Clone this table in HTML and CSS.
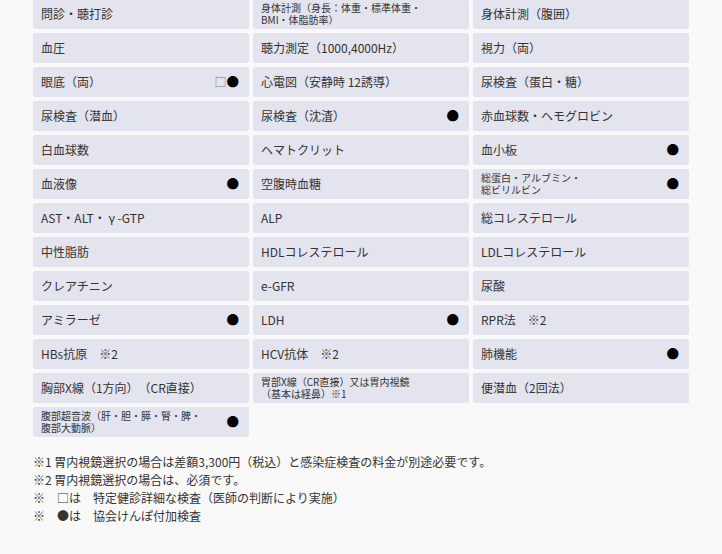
FILE: index.html
```html
<!DOCTYPE html>
<html lang="ja">
<head>
<meta charset="utf-8">
<link rel="stylesheet" href="styles.css">
</head>
<body>
<div class="page">
  <div class="grid">
    <div class="cell"><span>問診・聴打診</span></div>
    <div class="cell"><span class="small">身体計測（身長：体重・標準体重・<br>BMI・体脂肪率）</span></div>
    <div class="cell"><span>身体計測（腹囲）</span></div>

    <div class="cell"><span>血圧</span></div>
    <div class="cell"><span>聴力測定（1000,4000Hz）</span></div>
    <div class="cell"><span>視力（両）</span></div>

    <div class="cell"><span>眼底（両）</span><span class="mark"><span class="sq">□</span>●</span></div>
    <div class="cell"><span>心電図（安静時 12誘導）</span></div>
    <div class="cell"><span>尿検査（蛋白・糖）</span></div>

    <div class="cell"><span>尿検査（潜血）</span></div>
    <div class="cell"><span>尿検査（沈渣）</span><span class="mark">●</span></div>
    <div class="cell"><span>赤血球数・ヘモグロビン</span></div>

    <div class="cell"><span>白血球数</span></div>
    <div class="cell"><span>ヘマトクリット</span></div>
    <div class="cell"><span>血小板</span><span class="mark">●</span></div>

    <div class="cell"><span>血液像</span><span class="mark">●</span></div>
    <div class="cell"><span>空腹時血糖</span></div>
    <div class="cell"><span class="small">総蛋白・アルブミン・<br>総ビリルビン</span><span class="mark">●</span></div>

    <div class="cell"><span>AST・ALT・ γ -GTP</span></div>
    <div class="cell"><span>ALP</span></div>
    <div class="cell"><span>総コレステロール</span></div>

    <div class="cell"><span>中性脂肪</span></div>
    <div class="cell"><span>HDLコレステロール</span></div>
    <div class="cell"><span>LDLコレステロール</span></div>

    <div class="cell"><span>クレアチニン</span></div>
    <div class="cell"><span>e-GFR</span></div>
    <div class="cell"><span>尿酸</span></div>

    <div class="cell"><span>アミラーゼ</span><span class="mark">●</span></div>
    <div class="cell"><span>LDH</span><span class="mark">●</span></div>
    <div class="cell"><span>RPR法　※2</span></div>

    <div class="cell"><span>HBs抗原　※2</span></div>
    <div class="cell"><span>HCV抗体　※2</span></div>
    <div class="cell"><span>肺機能</span><span class="mark">●</span></div>

    <div class="cell"><span>胸部X線（1方向）（CR直接）</span></div>
    <div class="cell"><span class="small">胃部X線（CR直接）又は胃内視鏡<br>（基本は経鼻）※1</span></div>
    <div class="cell"><span>便潜血（2回法）</span></div>

    <div class="cell"><span class="small">腹部超音波（肝・胆・膵・腎・脾・<br>腹部大動脈）</span><span class="mark">●</span></div>
  </div>

  <div class="notes">
    <p>※1 胃内視鏡選択の場合は差額3,300円（税込）と感染症検査の料金が別途必要です。</p>
    <p>※2 胃内視鏡選択の場合は、必須です。</p>
    <p>※　□は　特定健診詳細な検査（医師の判断により実施）</p>
    <p>※　●は　協会けんぽ付加検査</p>
  </div>
</div>
</body>
</html>
```

FILE: styles.css
```css
html, body {
  margin: 0;
  padding: 0;
  background: #f9f9f9;
}

body {
  font-family: "Noto Sans CJK JP", "Noto Sans", sans-serif;
  color: #333333;
  text-spacing-trim: space-all;
}

.page {
  padding: 0 33px;
  margin-top: -1px;
}

.grid {
  display: grid;
  grid-template-columns: repeat(3, 216px);
  grid-auto-rows: 30px;
  gap: 4px;
}

.cell {
  background: #e4e4ee;
  border-radius: 2px;
  display: flex;
  align-items: center;
  justify-content: space-between;
  padding: 0 10px 0 8px;
  font-size: 12px;
  line-height: 1;
}

.small {
  font-size: 10px;
  line-height: 12px;
}

.mark {
  font-size: 12.5px;
  color: #000;
  display: flex;
  align-items: center;
}

.sq {
  color: #777;
  font-size: 12px;
}

.notes {
  margin-top: 16px;
  font-size: 12px;
  line-height: 18px;
}

.notes p {
  margin: 0;
}
```
